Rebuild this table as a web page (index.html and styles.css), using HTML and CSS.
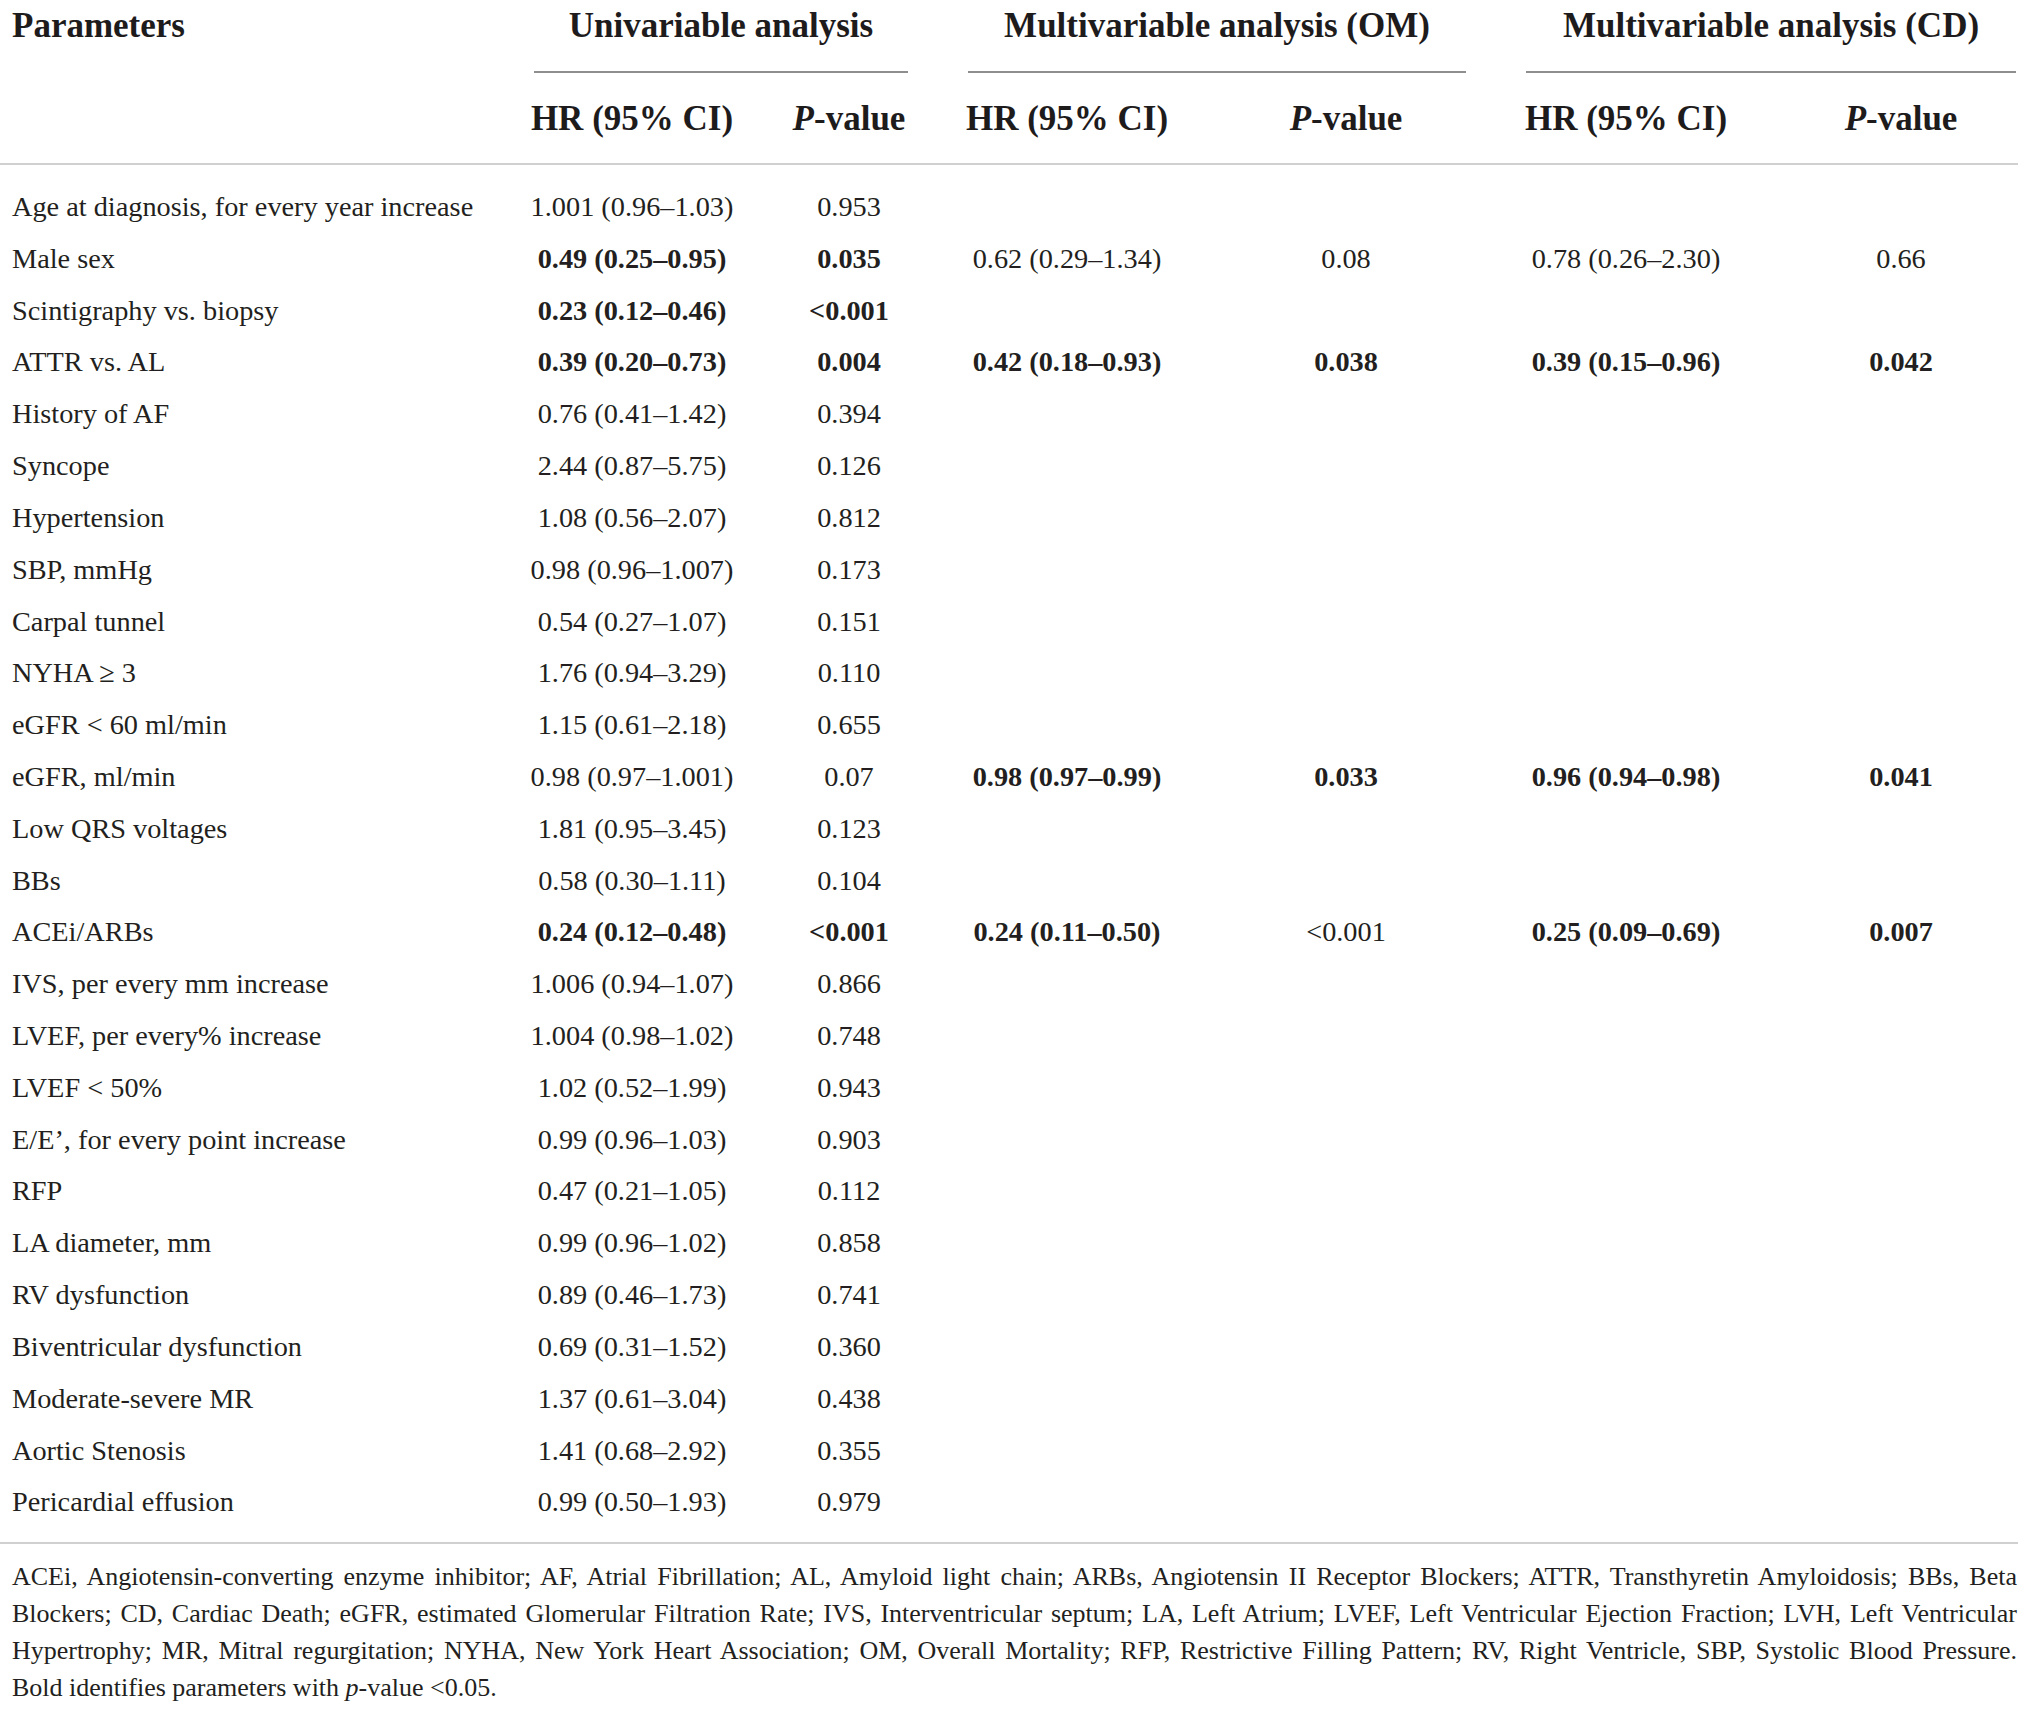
FILE: index.html
```html
<!DOCTYPE html>
<html lang="en">
<head>
  <meta charset="UTF-8">
  <title>Cox regression analysis</title>
  <link rel="stylesheet" href="styles.css">
</head>
<body>
  <div class="wrap">
    <table class="results">
      <colgroup>
        <col class="c-param">
        <col class="c-hr1">
        <col class="c-p1">
        <col class="c-hr2">
        <col class="c-p2">
        <col class="c-hr3">
        <col class="c-p3">
      </colgroup>
      <thead>
        <tr class="group-row">
          <th rowspan="2" class="param-head">Parameters</th>
          <th colspan="2" class="group"><div>Univariable analysis</div></th>
          <th colspan="2" class="group"><div>Multivariable analysis (OM)</div></th>
          <th colspan="2" class="group"><div>Multivariable analysis (CD)</div></th>
        </tr>
        <tr class="sub-row">
          <th>HR (95% CI)</th>
          <th><i>P</i>-value</th>
          <th>HR (95% CI)</th>
          <th><i>P</i>-value</th>
          <th>HR (95% CI)</th>
          <th><i>P</i>-value</th>
        </tr>
      </thead>
      <tbody>
        <tr><td>Age at diagnosis, for every year increase</td><td>1.001 (0.96–1.03)</td><td>0.953</td><td></td><td></td><td></td><td></td></tr>
        <tr><td>Male sex</td><td class="b">0.49 (0.25–0.95)</td><td class="b">0.035</td><td>0.62 (0.29–1.34)</td><td>0.08</td><td>0.78 (0.26–2.30)</td><td>0.66</td></tr>
        <tr><td>Scintigraphy vs. biopsy</td><td class="b">0.23 (0.12–0.46)</td><td class="b">&lt;0.001</td><td></td><td></td><td></td><td></td></tr>
        <tr><td>ATTR vs. AL</td><td class="b">0.39 (0.20–0.73)</td><td class="b">0.004</td><td class="b">0.42 (0.18–0.93)</td><td class="b">0.038</td><td class="b">0.39 (0.15–0.96)</td><td class="b">0.042</td></tr>
        <tr><td>History of AF</td><td>0.76 (0.41–1.42)</td><td>0.394</td><td></td><td></td><td></td><td></td></tr>
        <tr><td>Syncope</td><td>2.44 (0.87–5.75)</td><td>0.126</td><td></td><td></td><td></td><td></td></tr>
        <tr><td>Hypertension</td><td>1.08 (0.56–2.07)</td><td>0.812</td><td></td><td></td><td></td><td></td></tr>
        <tr><td>SBP, mmHg</td><td>0.98 (0.96–1.007)</td><td>0.173</td><td></td><td></td><td></td><td></td></tr>
        <tr><td>Carpal tunnel</td><td>0.54 (0.27–1.07)</td><td>0.151</td><td></td><td></td><td></td><td></td></tr>
        <tr><td>NYHA ≥ 3</td><td>1.76 (0.94–3.29)</td><td>0.110</td><td></td><td></td><td></td><td></td></tr>
        <tr><td>eGFR &lt; 60 ml/min</td><td>1.15 (0.61–2.18)</td><td>0.655</td><td></td><td></td><td></td><td></td></tr>
        <tr><td>eGFR, ml/min</td><td>0.98 (0.97–1.001)</td><td>0.07</td><td class="b">0.98 (0.97–0.99)</td><td class="b">0.033</td><td class="b">0.96 (0.94–0.98)</td><td class="b">0.041</td></tr>
        <tr><td>Low QRS voltages</td><td>1.81 (0.95–3.45)</td><td>0.123</td><td></td><td></td><td></td><td></td></tr>
        <tr><td>BBs</td><td>0.58 (0.30–1.11)</td><td>0.104</td><td></td><td></td><td></td><td></td></tr>
        <tr><td>ACEi/ARBs</td><td class="b">0.24 (0.12–0.48)</td><td class="b">&lt;0.001</td><td class="b">0.24 (0.11–0.50)</td><td>&lt;0.001</td><td class="b">0.25 (0.09–0.69)</td><td class="b">0.007</td></tr>
        <tr><td>IVS, per every mm increase</td><td>1.006 (0.94–1.07)</td><td>0.866</td><td></td><td></td><td></td><td></td></tr>
        <tr><td>LVEF, per every% increase</td><td>1.004 (0.98–1.02)</td><td>0.748</td><td></td><td></td><td></td><td></td></tr>
        <tr><td>LVEF &lt; 50%</td><td>1.02 (0.52–1.99)</td><td>0.943</td><td></td><td></td><td></td><td></td></tr>
        <tr><td>E/E’, for every point increase</td><td>0.99 (0.96–1.03)</td><td>0.903</td><td></td><td></td><td></td><td></td></tr>
        <tr><td>RFP</td><td>0.47 (0.21–1.05)</td><td>0.112</td><td></td><td></td><td></td><td></td></tr>
        <tr><td>LA diameter, mm</td><td>0.99 (0.96–1.02)</td><td>0.858</td><td></td><td></td><td></td><td></td></tr>
        <tr><td>RV dysfunction</td><td>0.89 (0.46–1.73)</td><td>0.741</td><td></td><td></td><td></td><td></td></tr>
        <tr><td>Biventricular dysfunction</td><td>0.69 (0.31–1.52)</td><td>0.360</td><td></td><td></td><td></td><td></td></tr>
        <tr><td>Moderate-severe MR</td><td>1.37 (0.61–3.04)</td><td>0.438</td><td></td><td></td><td></td><td></td></tr>
        <tr><td>Aortic Stenosis</td><td>1.41 (0.68–2.92)</td><td>0.355</td><td></td><td></td><td></td><td></td></tr>
        <tr><td>Pericardial effusion</td><td>0.99 (0.50–1.93)</td><td>0.979</td><td></td><td></td><td></td><td></td></tr>
      </tbody>
    </table>

    <div class="notes">
      <p class="abbr">
        <span>ACEi, Angiotensin-converting enzyme inhibitor; AF, Atrial Fibrillation; AL, Amyloid light chain; ARBs, Angiotensin II Receptor Blockers; ATTR, Transthyretin Amyloidosis; BBs, Beta</span>
        <span>Blockers; CD, Cardiac Death; eGFR, estimated Glomerular Filtration Rate; IVS, Interventricular septum; LA, Left Atrium; LVEF, Left Ventricular Ejection Fraction; LVH, Left Ventricular</span>
        <span>Hypertrophy; MR, Mitral regurgitation; NYHA, New York Heart Association; OM, Overall Mortality; RFP, Restrictive Filling Pattern; RV, Right Ventricle, SBP, Systolic Blood Pressure.</span>
      </p>
      <p>Bold identifies parameters with <i>p</i>-value &lt;0.05.</p>
    </div>
  </div>
</body>
</html>
```

FILE: styles.css
```css
body {
  margin: 0;
  background: #fff;
  color: #231f20;
  font-family: "Liberation Serif", "Times New Roman", serif;
}
.wrap {
  width: 2018px;
}
.results {
  width: 2018px;
  table-layout: fixed;
  border-collapse: separate;
  border-spacing: 0;
  font-size: 28.3px;
}
.c-param { width: 476px; }
.c-hr1 { width: 312px; }
.c-p1 { width: 122px; }
.c-hr2 { width: 314px; }
.c-p2 { width: 244px; }
.c-hr3 { width: 316px; }
.c-p3 { width: 234px; }

.results th {
  font-size: 35px;
  font-weight: bold;
  line-height: 40px;
  text-align: center;
  white-space: nowrap;
  padding: 0;
  color: #1e1b1c;
}
.results th i {
  font-style: italic;
}
.param-head {
  text-align: left !important;
  vertical-align: top;
  padding: 6px 0 0 12px !important;
  border-bottom: 2px solid #d0d0d0;
}
.group-row .group {
  padding: 6px 2px 0 58px;
}
.group div {
  padding-bottom: 25px;
  border-bottom: 2px solid #8e8e8e;
}
.sub-row th {
  padding: 26px 0 24px;
  border-bottom: 2px solid #d0d0d0;
}

.results td {
  line-height: 38px;
  padding: 6.92px 0;
  text-align: center;
  white-space: nowrap;
}
.results td:first-child {
  text-align: left;
  padding-left: 12px;
}
.results tbody tr:first-child td {
  padding-top: 23px;
}
.results tbody tr:last-child td {
  padding-bottom: 21px;
  border-bottom: 2px solid #d0d0d0;
}
.results td.b {
  font-weight: bold;
}

.notes {
  margin-top: 14px;
  padding: 0 1px 0 12px;
  font-size: 26px;
  line-height: 37px;
}
.notes p {
  margin: 0;
}
.abbr span {
  display: block;
  text-align: justify;
  text-align-last: justify;
}
```
